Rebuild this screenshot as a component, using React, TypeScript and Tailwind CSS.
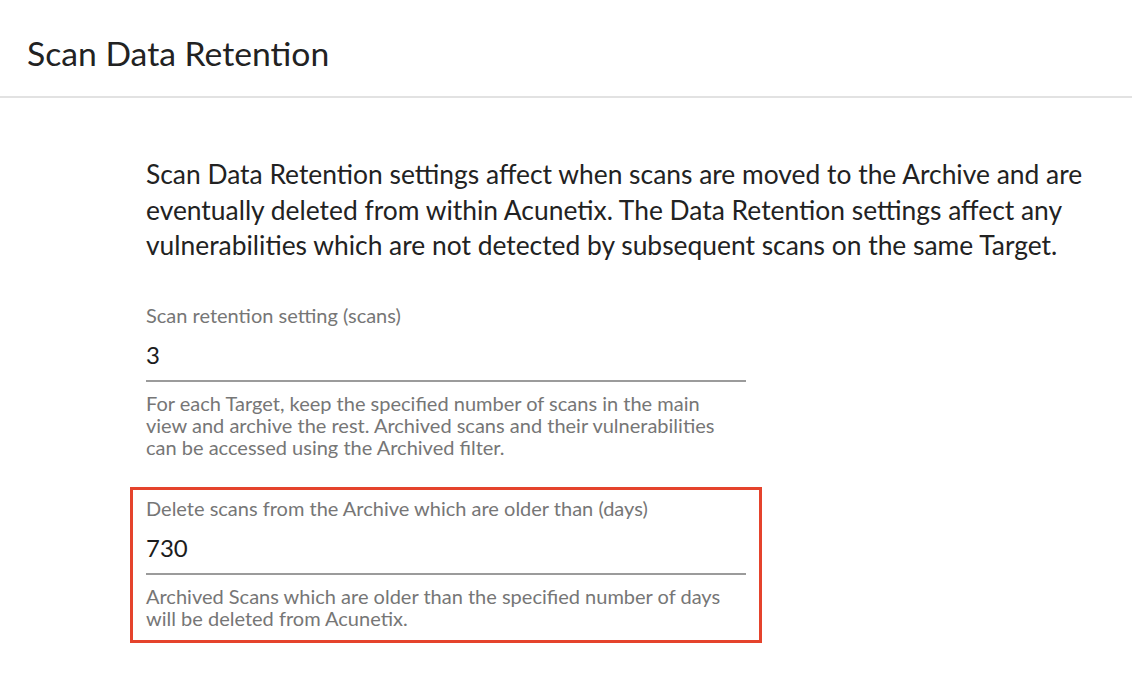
function Field({ label, value, help }: { label: string; value: string; help: string[] }) {
  return (
    <div className="w-[600px]">
      <div className="text-[20px] leading-[22px] text-[#767676] whitespace-nowrap">{label}</div>
      <div className="mt-[15px] pb-[11px] border-b-2 border-[#9b9b9b]">
        <div className="text-[24px] leading-[28px] text-[#1c1c1c]">{value}</div>
      </div>
      <div className="mt-[10px] text-[20px] leading-[22px] text-[#767676] whitespace-nowrap">
        {help.map((h) => (
          <div key={h}>{h}</div>
        ))}
      </div>
    </div>
  );
}

export default function App() {
  return (
    <div className="w-[1132px] h-[696px] bg-white overflow-hidden" style={{ fontFamily: 'Lato, "Open Sans", sans-serif' }}>
      <div className="pt-[35px] pb-[25px] pl-[27px] border-b-2 border-[#e2e2e2]">
        <h1 className="text-[33.7px] leading-[36px] text-[#222222] font-normal">Scan Data Retention</h1>
      </div>
      <div className="pl-[146px]">
        <div className="mt-[59px] text-[26.4px] leading-[35.5px] text-[#222222] whitespace-nowrap">
          <div>Scan Data Retention settings affect when scans are moved to the Archive and are</div>
          <div>eventually deleted from within Acunetix. The Data Retention settings affect any</div>
          <div>vulnerabilities which are not detected by subsequent scans on the same Target.</div>
        </div>
        <div className="mt-[40px]">
          <Field
            label="Scan retention setting (scans)"
            value="3"
            help={[
              'For each Target, keep the specified number of scans in the main',
              'view and archive the rest. Archived scans and their vulnerabilities',
              'can be accessed using the Archived filter.',
            ]}
          />
        </div>
        <div className="mt-[29px] -ml-[16px] w-[632px] border-[3px] border-[#e5432c] pl-[13px] pt-[7px] pb-[11px]">
          <Field
            label="Delete scans from the Archive which are older than (days)"
            value="730"
            help={[
              'Archived Scans which are older than the specified number of days',
              'will be deleted from Acunetix.',
            ]}
          />
        </div>
      </div>
    </div>
  );
}
